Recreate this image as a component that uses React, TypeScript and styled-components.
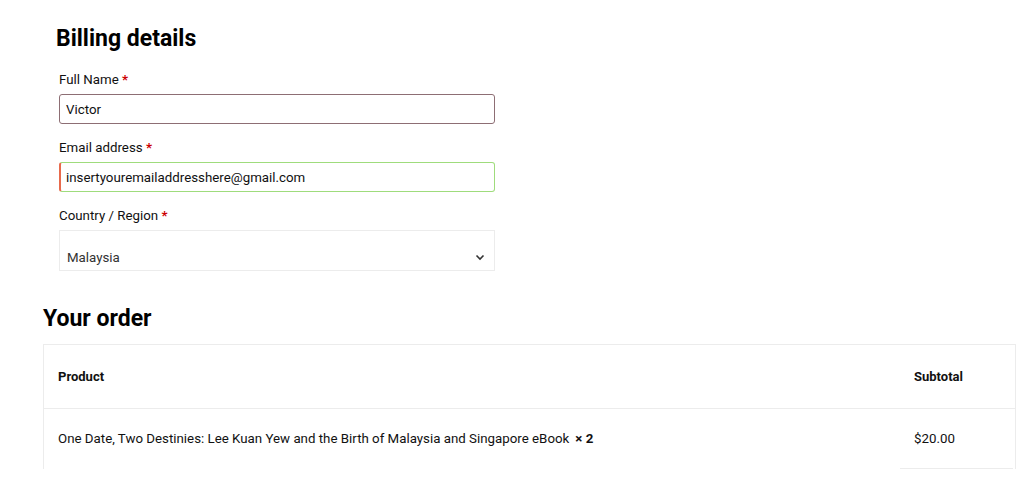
import React from 'react'
import styled, { createGlobalStyle } from 'styled-components'

const GlobalStyle = createGlobalStyle`
  body {
    margin: 0;
    background: #fff;
    font-family: Roboto, "Liberation Sans", sans-serif;
    color: #111;
  }
`

const Page = styled.div`
  width: 1024px;
  height: 477px;
  overflow: hidden;
  padding-top: 24px;
  box-sizing: border-box;
`

const Billing = styled.section`
  padding-left: 56px;
  width: 440px;
`

const Heading = styled.h2<{ $gap?: number }>`
  margin: 0 0 ${p => p.$gap ?? 12}px 0;
  font-size: 23px;
  font-weight: 700;
  line-height: 30px;
  color: #000;
`

const Field = styled.div`
  padding-left: 3px;
  margin-bottom: 14px;
`

const Label = styled.label`
  display: block;
  font-size: 13.3px;
  line-height: 20px;
  margin-bottom: 4px;
  color: #111;

  span {
    color: #c00;
    font-weight: 700;
  }
`

const Input = styled.div<{ $variant: 'focus' | 'valid' }>`
  height: 30px;
  box-sizing: border-box;
  width: 436px;
  border-radius: 3px;
  padding: 0 6px;
  display: flex;
  align-items: center;
  font-size: 13.3px;
  color: #111;
  border: 1px solid ${p => (p.$variant === 'focus' ? '#8d6e74' : '#9fdc7c')};
  ${p => p.$variant === 'valid' && 'border-left: 2px solid #e86a4c; padding-left: 5px;'}
`

const Select = styled.div`
  height: 41px;
  width: 436px;
  box-sizing: border-box;
  border: 1px solid #ececec;
  padding: 14px 9px 0 7px;
  margin-top: 4px;
  display: flex;
  align-items: center;
  justify-content: space-between;
  font-size: 13.3px;
  color: #333;
`

const Order = styled.section`
  margin-left: 43px;
  margin-top: 33px;
  width: 973px;
`

const Table = styled.div`
  border: 1px solid #ececec;
  border-bottom: none;
  width: 100%;
  box-sizing: border-box;
`

const Row = styled.div<{ $head?: boolean }>`
  display: grid;
  grid-template-columns: 1fr 115px;
  font-size: ${p => (p.$head ? 13 : 13.3)}px;
  font-weight: ${p => (p.$head ? 700 : 400)};
  ${p => p.$head && 'border-bottom: 1px solid #ececec;'}
`

const Cell = styled.div<{ $head?: boolean; $underline?: boolean }>`
  height: ${p => (p.$head ? 63 : 59)}px;
  display: flex;
  align-items: center;
  padding-left: 14px;
  color: #111;
  ${p => p.$underline && 'border-bottom: 1px solid #ececec; margin-right: 2px;'}

  b {
    font-weight: 700;
    margin-left: 6px;
  }
`

const Chevron = () => (
  <svg width="10" height="7" viewBox="0 0 10 7" fill="none">
    <path d="M1.5 1.5 L5 5 L8.5 1.5" stroke="#333" strokeWidth="1.6" />
  </svg>
)

export default function App() {
  return (
    <Page>
      <GlobalStyle />
      <Billing>
        <Heading $gap={16}>Billing details</Heading>
        <Field>
          <Label>Full Name <span>*</span></Label>
          <Input $variant="focus">Victor</Input>
        </Field>
        <Field>
          <Label>Email address <span>*</span></Label>
          <Input $variant="valid">insertyouremailaddresshere@gmail.com</Input>
        </Field>
        <Field>
          <Label>Country / Region <span>*</span></Label>
          <Select>
            Malaysia
            <Chevron />
          </Select>
        </Field>
      </Billing>
      <Order>
        <Heading $gap={10}>Your order</Heading>
        <Table>
          <Row $head>
            <Cell $head>Product</Cell>
            <Cell $head>Subtotal</Cell>
          </Row>
          <Row>
            <Cell>
              One Date, Two Destinies: Lee Kuan Yew and the Birth of Malaysia and Singapore eBook <b>× 2</b>
            </Cell>
            <Cell $underline>$20.00</Cell>
          </Row>
        </Table>
      </Order>
    </Page>
  )
}
